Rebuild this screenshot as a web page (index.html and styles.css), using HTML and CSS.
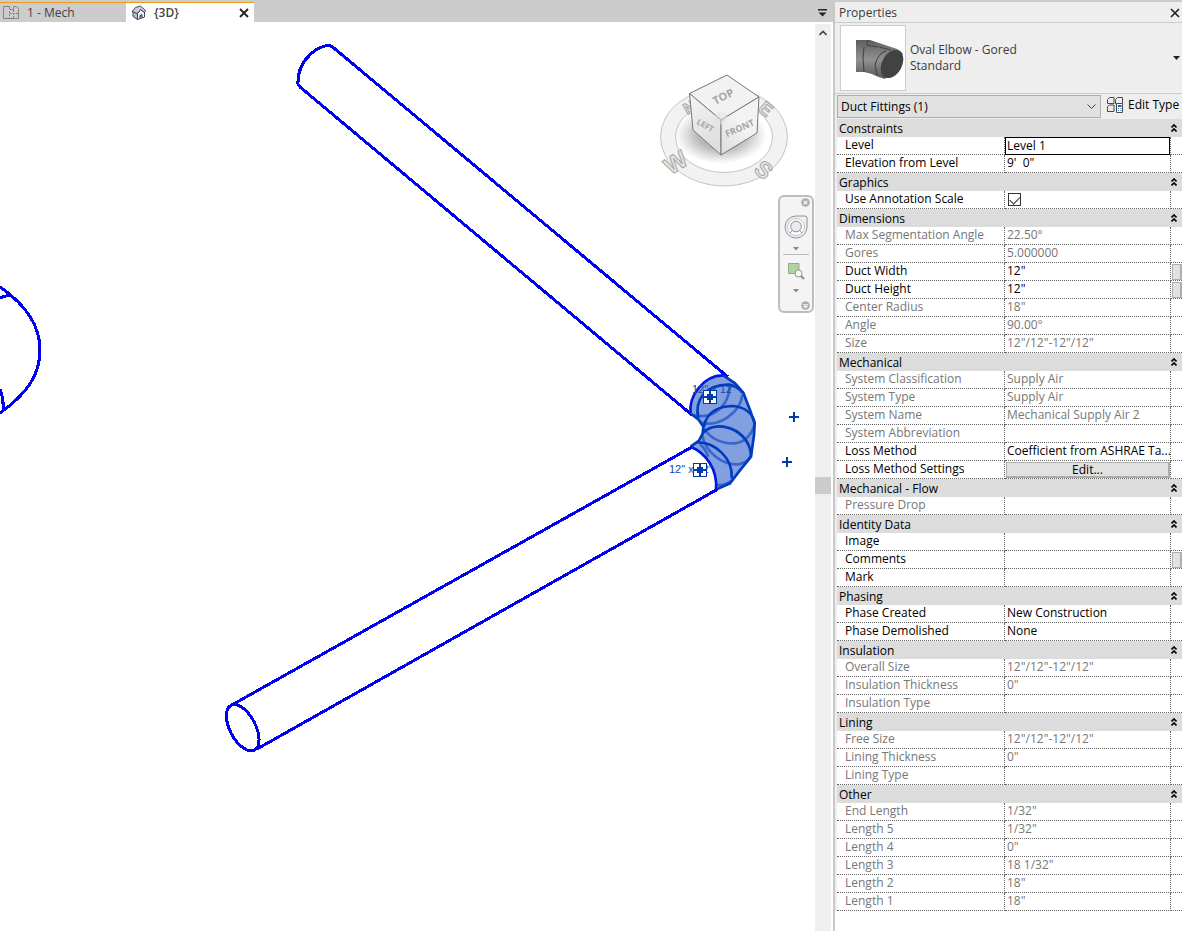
FILE: index.html
```html
<!DOCTYPE html>
<html lang="en">
<head>
<meta charset="utf-8">
<title>{3D} - Properties</title>
<link rel="stylesheet" href="styles.css">
</head>
<body>
<div class="app">
  <main class="workspace">
    <nav class="tabs" aria-label="Views">
      <div class="tab tab-mech">
        <button class="tab-label" type="button">
          <svg width="17" height="16" viewBox="0 0 17 16" fill="none" stroke="#858585"><path d="M6.500 4V1.500H.5v12h6M6.500 4.500h4v-3h3l2 2v10h-9"/><path d="M10.500 5v8M7 8.500h8M6.500 6v8" stroke-dasharray="2 1"/></svg>
          <span>1 - Mech</span>
        </button>
      </div>
      <div class="tab tab-active">
        <button class="tab-label" type="button">
          <svg width="16" height="16" viewBox="0 0 16 16" stroke="#3e4653" stroke-linejoin="round"><path d="M2 6.500l4.500 2v6l-4.500-3z" fill="#aebbd0"/><path d="M6.500 8.500l3-4 4 3v4.500l-7 2.500z" fill="#f5f8fb"/><path d="M1 6.500l3.500-4 5-1.500 5 4.500-1 2-4-3-3 4z" fill="#c6d0df"/><path d="M9 13.500v-3l2-1v3.500" fill="#8091a9"/></svg>
          <span>{3D}</span>
        </button>
        <button class="icon-button" type="button" aria-label="Close view"><svg width="10" height="10" viewBox="0 0 10 10"><path d="M1 1l8 8M9 1L1 9" stroke="#222" stroke-width="1.800"/></svg></button>
      </div>
      <button class="icon-button tab-menu" type="button" aria-label="View list"><svg width="9" height="8" viewBox="0 0 9 8" fill="#222"><path d="M0 0h9v1.500H0zM.5 3.500h8l-4 4z"/></svg></button>
    </nav>
    <div class="view">
      <div class="canvas">
        <svg class="model" viewBox="0 22 815 909" aria-label="3D model">
          <defs>
            <radialGradient id="shade"><stop offset="0.500" stop-color="#999" stop-opacity=".7"/><stop offset="1" stop-color="#aaa" stop-opacity="0"/></radialGradient>
            <linearGradient id="faceL" x1="0" y1="0" x2="0.300" y2="1"><stop offset="0" stop-color="#f4f4f4"/><stop offset="1" stop-color="#dedede"/></linearGradient>
            <linearGradient id="faceR" x1="0" y1="1" x2="0.700" y2="0"><stop offset="0" stop-color="#dcdcdc"/><stop offset=".6" stop-color="#f3f3f3"/></linearGradient>
          </defs>
          <g class="pipe">
            <path d="M0 287C32 309 40 331 40 350C40 374 28 393 0 413M0 298Q5 295 11 296M0 389Q4 399 3 411"/>
            <path d="M728 377L332 46.500C322 42 297 58 298 84L300 87L692 415"/>
            <ellipse cx="242.700" cy="727.700" rx="25.300" ry="12.800" transform="rotate(62.400 242.700 727.700)"/>
            <path d="M230 706L692 447M257 749L718 489"/>
          </g>
          <g transform="translate(655 360) scale(.33333)" class="elbow">
            <path class="elbow-fill" d="M107 162C100 110 145 45 205 46L240 68L265 100L285 150L299 190L297 225L288 290L250 337L225 370L185 388C185 330 155 280 107 260L132 242L143 220L145 200L130 178Z"/>
            <path class="hidden-line" d="M222 70C232 110 192 185 112 165M262 104C258 155 195 202 138 188M147 205C165 235 200 252 240 250C275 245 295 215 299 190M142 225C150 275 200 315 250 313C275 308 285 295 288 285M184 375Q210 378 232 360M135 252Q150 265 160 290"/>
            <path d="M205 46L240 70L265 98L285 150L299 190L297 225L288 290L250 337L225 370L185 388M107 260L132 242L143 220L145 200L130 178L109 162"/>
            <path d="M130 175C118 120 150 75 220 74Q248 78 262 98M147 200C155 150 200 138 235 138C275 143 295 165 299 190M143 220C160 200 190 195 215 202C250 210 285 240 288 285M125 247C180 245 235 295 230 355"/>
            <path class="pipe-end" d="M107 160C100 110 145 45 205 46M107 260C155 280 188 330 183 388"/>
          </g>
          <g class="dimension">
            <text x="692" y="393">12" x 12"</text>
            <text x="669" y="473">12" x 12"</text>
          </g>
          <g class="grip">
            <path class="grip-box" d="M703.500 390.500h13v13h-13zM693.500 463.500h13v13h-13z"/>
            <path d="M710 391v12M704 397h12M700 464v12M694 470h12"/>
            <path d="M708 395h4v4h-4zM698 468h4v4h-4z"/>
            <path d="M794 412v10M789 417h10M787 457v10M782 462h10"/>
          </g>
          <g class="compass">
            <path fill-rule="evenodd" d="M660.500 137a63.500 49 0 1 0 127 0a63.500 49 0 1 0-127 0M675.500 137a48.500 35.500 0 1 0 97 0a48.500 35.500 0 1 0-97 0"/>
            <text x="-11" y="9" transform="translate(675 162) rotate(-32)" font-size="24">W</text>
            <text x="-8" y="8" transform="translate(764 170) rotate(40)" font-size="23">S</text>
            <text x="-7" y="7" transform="translate(767 109) rotate(40)" font-size="18">E</text>
            <text x="-6" y="7" transform="translate(689 106) rotate(-30)" font-size="16">N</text>
          </g>
          <ellipse cx="721" cy="135" rx="46" ry="29" fill="url(#shade)"/>
          <g stroke="#777" stroke-linejoin="round">
            <path d="M689.500 93.500L727 75L759 97L721 120Z" fill="#f2f2f2"/>
            <path d="M689.500 93.500L721 120V155L693 130Z" fill="url(#faceL)"/>
            <path d="M759 97L721 120V155L757 133Z" fill="url(#faceR)"/>
          </g>
          <path d="M715 114l6-3 6 3v7l-6 4-6-4z" fill="#dfe3e9" opacity=".55"/>
          <g class="cube-label">
            <text transform="translate(725 100) rotate(-27)" font-size="11">TOP</text>
            <text transform="translate(704 128) rotate(29)" font-size="8">LEFT</text>
            <text transform="translate(741 131) rotate(-24)" font-size="9">FRONT</text>
          </g>
        </svg>
        <div class="navbar" role="toolbar" aria-label="Navigation">
          <button class="icon-button nav-corner" type="button" aria-label="Close"><svg width="9" height="9" viewBox="0 0 9 9"><circle cx="4.500" cy="4.500" r="4.300" fill="#adadad"/><path d="M2.800 2.800l3.400 3.400M6.200 2.800L2.800 6.200" stroke="#fff" stroke-width="1.200"/></svg></button>
          <button class="icon-button nav-wheel" type="button" aria-label="Steering wheel"><svg width="24" height="24" viewBox="0 0 24 24" fill="#eef0f3" stroke="#8c919b"><path d="M12 1H21Q23 1 23 3V12A11 11 0 1 1 12 1Z"/><circle cx="12" cy="12" r="8.500" fill="#fafafa" stroke="#c4c7cc"/><path d="M6 18l3-3M18 18l-3-3"/><circle cx="12" cy="11.500" r="5.300" fill="#e9ebee"/></svg></button>
          <button class="icon-button nav-arrow" type="button" aria-label="Wheel options"><svg width="6" height="4" viewBox="0 0 6 4"><path d="M0 0h6L3 3.500z" fill="#888"/></svg></button>
          <hr class="nav-rule">
          <button class="icon-button nav-zoom" type="button" aria-label="Zoom region"><svg width="17" height="18" viewBox="0 0 17 18"><path d="M.5 1.500h10.500v10H.5z" fill="#b3d1a4" stroke="#87b47c"/><circle cx="10.500" cy="11.500" r="3.500" fill="#f8f8f8" stroke="#929292"/><path d="M13 14l3 3" stroke="#888" stroke-width="2"/></svg></button>
          <button class="icon-button nav-arrow" type="button" aria-label="Zoom options"><svg width="6" height="4" viewBox="0 0 6 4"><path d="M0 0h6L3 3.500z" fill="#888"/></svg></button>
          <button class="icon-button nav-corner" type="button" aria-label="Customize"><svg width="9" height="9" viewBox="0 0 9 9"><circle cx="4.500" cy="4.500" r="4.300" fill="#adadad"/><path d="M2 3.500h5M2.500 5h4l-2 2z" stroke="#fff" fill="#fff" stroke-width=".7"/></svg></button>
        </div>
      </div>
      <div class="scrollbar">
        <button class="icon-button" type="button" aria-label="Scroll up"><svg width="8" height="6" viewBox="0 0 8 6" fill="none"><path d="M.5 5L4 1.500 7.500 5" stroke="#444" stroke-width="1.600"/></svg></button>
        <div class="thumb"></div>
      </div>
    </div>
  </main>

  <aside class="panel">
    <header class="panel-title"><h1>Properties</h1>
      <button class="icon-button" type="button" aria-label="Close properties"><svg width="10" height="10" viewBox="0 0 10 10"><path d="M1 1l8 8M9 1L1 9" stroke="#222" stroke-width="1.700"/></svg></button>
    </header>
    <section class="type-card">
      <div class="preview">
        <svg width="50" height="44" viewBox="0 0 50 44"><defs><linearGradient id="metal" x1="0" y1="0" x2="0" y2="1"><stop offset="0" stop-color="#5d5d5d"/><stop offset=".5" stop-color="#929292"/><stop offset="1" stop-color="#555"/></linearGradient></defs><path d="M1 2H15L36 9Q45 11 48 16L30 41Q20 38 17 36L9 34H1Z" fill="url(#metal)"/><ellipse cx="37" cy="26" rx="15" ry="10" transform="rotate(-62 37 26)" fill="#424242"/><path d="M13 2L12 6M9 9L8 20L9 34M11 7L23 9M31 13Q23 15 20 27L22 37M24 9L36 12" fill="none" stroke="#3f3f3f"/></svg>
      </div>
      <p class="type-name">Oval Elbow - Gored<br>Standard</p>
      <button class="icon-button type-arrow" type="button" aria-label="Choose type"><svg width="7" height="4" viewBox="0 0 7 4"><path d="M0 0h7L3.500 4z" fill="#222"/></svg></button>
    </section>
    <div class="filter">
      <div class="select-wrap">
        <select aria-label="Category filter"><option>Duct Fittings (1)</option></select>
        <svg width="9" height="6" viewBox="0 0 9 6" fill="none"><path d="M.5.5l4 4 4-4" stroke="#444"/></svg>
      </div>
      <button class="edit-type" type="button">
        <svg width="17" height="16" viewBox="0 0 17 16" fill="none" stroke="#4b4b4b"><path d="M.5 6.500v-4l2-2h4.500v6zM8.500 6.500v-4l2-2h5v6zM.5 14.500v-5l2-1.500h4.500v6.500z"/><path d="M9.500 6.500h6v9h-6z" fill="#fff"/><path d="M11 9h3.500" stroke="#1566b7" stroke-width="2"/><path d="M11 11.500h1M13.500 11.500h1M11 13.500h1M13.500 13.500h1" stroke="#1566b7"/></svg>
        <span>Edit Type</span>
      </button>
    </div>
    <table class="props">
      <colgroup><col class="col-name"><col><col class="col-extra"></colgroup>
      <tbody>
        <tr class="group"><th colspan="2">Constraints</th><td><button class="fold" type="button" aria-label="Collapse Constraints"></button></td></tr>
        <tr><th><label for="level">Level</label></th><td class="focused"><input id="level" value="Level 1"></td><td></td></tr>
        <tr><th><label for="elev">Elevation from Level</label></th><td><input id="elev" value="9'  0&quot;"></td><td></td></tr>
      </tbody>
      <tbody>
        <tr class="group"><th colspan="2">Graphics</th><td><button class="fold" type="button" aria-label="Collapse Graphics"></button></td></tr>
        <tr><th><label for="anno">Use Annotation Scale</label></th><td><input id="anno" type="checkbox" checked></td><td></td></tr>
      </tbody>
      <tbody>
        <tr class="group"><th colspan="2">Dimensions</th><td><button class="fold" type="button" aria-label="Collapse Dimensions"></button></td></tr>
        <tr class="locked"><th>Max Segmentation Angle</th><td>22.50°</td><td></td></tr>
        <tr class="locked"><th>Gores</th><td>5.000000</td><td></td></tr>
        <tr><th><label for="dw">Duct Width</label></th><td><input id="dw" value="12&quot;"></td><td><button class="assoc" type="button" aria-label="Associate Duct Width"></button></td></tr>
        <tr><th><label for="dh">Duct Height</label></th><td><input id="dh" value="12&quot;"></td><td><button class="assoc" type="button" aria-label="Associate Duct Height"></button></td></tr>
        <tr class="locked"><th>Center Radius</th><td>18"</td><td></td></tr>
        <tr class="locked"><th>Angle</th><td>90.00°</td><td></td></tr>
        <tr class="locked"><th>Size</th><td>12"/12"-12"/12"</td><td></td></tr>
      </tbody>
      <tbody>
        <tr class="group"><th colspan="2">Mechanical</th><td><button class="fold" type="button" aria-label="Collapse Mechanical"></button></td></tr>
        <tr class="locked"><th>System Classification</th><td>Supply Air</td><td></td></tr>
        <tr class="locked"><th>System Type</th><td>Supply Air</td><td></td></tr>
        <tr class="locked"><th>System Name</th><td>Mechanical Supply Air 2</td><td></td></tr>
        <tr class="locked"><th>System Abbreviation</th><td></td><td></td></tr>
        <tr><th><label for="loss">Loss Method</label></th><td><input id="loss" value="Coefficient from ASHRAE Ta..."></td><td></td></tr>
        <tr><th>Loss Method Settings</th><td><button class="edit" type="button">Edit...</button></td><td></td></tr>
      </tbody>
      <tbody>
        <tr class="group"><th colspan="2">Mechanical - Flow</th><td><button class="fold" type="button" aria-label="Collapse Mechanical - Flow"></button></td></tr>
        <tr class="locked"><th>Pressure Drop</th><td></td><td></td></tr>
      </tbody>
      <tbody>
        <tr class="group"><th colspan="2">Identity Data</th><td><button class="fold" type="button" aria-label="Collapse Identity Data"></button></td></tr>
        <tr><th><label for="image">Image</label></th><td><input id="image"></td><td></td></tr>
        <tr><th><label for="comments">Comments</label></th><td><input id="comments"></td><td><button class="assoc" type="button" aria-label="Associate Comments"></button></td></tr>
        <tr><th><label for="mark">Mark</label></th><td><input id="mark"></td><td></td></tr>
      </tbody>
      <tbody>
        <tr class="group"><th colspan="2">Phasing</th><td><button class="fold" type="button" aria-label="Collapse Phasing"></button></td></tr>
        <tr><th><label for="created">Phase Created</label></th><td><input id="created" value="New Construction"></td><td></td></tr>
        <tr><th><label for="demolished">Phase Demolished</label></th><td><input id="demolished" value="None"></td><td></td></tr>
      </tbody>
      <tbody>
        <tr class="group"><th colspan="2">Insulation</th><td><button class="fold" type="button" aria-label="Collapse Insulation"></button></td></tr>
        <tr class="locked"><th>Overall Size</th><td>12"/12"-12"/12"</td><td></td></tr>
        <tr class="locked"><th>Insulation Thickness</th><td>0"</td><td></td></tr>
        <tr class="locked"><th>Insulation Type</th><td></td><td></td></tr>
      </tbody>
      <tbody>
        <tr class="group"><th colspan="2">Lining</th><td><button class="fold" type="button" aria-label="Collapse Lining"></button></td></tr>
        <tr class="locked"><th>Free Size</th><td>12"/12"-12"/12"</td><td></td></tr>
        <tr class="locked"><th>Lining Thickness</th><td>0"</td><td></td></tr>
        <tr class="locked"><th>Lining Type</th><td></td><td></td></tr>
      </tbody>
      <tbody>
        <tr class="group"><th colspan="2">Other</th><td><button class="fold" type="button" aria-label="Collapse Other"></button></td></tr>
        <tr class="locked"><th>End Length</th><td>1/32"</td><td></td></tr>
        <tr class="locked"><th>Length 5</th><td>1/32"</td><td></td></tr>
        <tr class="locked"><th>Length 4</th><td>0"</td><td></td></tr>
        <tr class="locked"><th>Length 3</th><td>18 1/32"</td><td></td></tr>
        <tr class="locked"><th>Length 2</th><td>18"</td><td></td></tr>
        <tr class="locked"><th>Length 1</th><td>18"</td><td></td></tr>
      </tbody>
    </table>
  </aside>
</div>
<script src="fold.js"></script>
</body>
</html>
```
FILE: fold.js
```js
// Every group header carries the same double-chevron glyph.
document.querySelectorAll('.fold').forEach(function (button) {
  button.innerHTML = '<svg width="6" height="8" viewBox="0 0 6 8" fill="none" stroke="#000" stroke-width="1.600"><path d="M.5 3.500L3 1l2.500 2.500M.5 7.500L3 5l2.500 2.500"/></svg>';
});
```
FILE: styles.css
```css
* { box-sizing: border-box; }
body { margin: 0; background: #fff; color: #000; font: 12px/16px "Open Sans", "Noto Sans", sans-serif; }
button, input, select { font: inherit; color: inherit; margin: 0; }
button { padding: 0; border: 0; background: none; }
svg { display: block; flex: none; }

.app { display: grid; grid-template-columns: 1fr 349px; min-height: 100vh; border-top: 2px solid #ccc; }
.workspace { display: flex; flex-direction: column; min-width: 0; }
.icon-button { display: flex; align-items: center; justify-content: center; }

.tabs { display: flex; height: 20px; background: #ccc; color: #444; }
.tab { display: flex; align-items: center; justify-content: space-between; border-top: 1px solid #f09a1a; padding: 0 5px 0 3px; }
.tab-mech { width: 126px; }
.tab-active { width: 128px; background: #fff; font-weight: 600; padding-left: 5px; }
.tab-label { display: flex; align-items: center; gap: 7px; }
.tab-menu { margin-left: auto; padding: 2px 6px 0 0; }

.view { display: flex; flex: 1; }
.canvas { position: relative; flex: 1; min-width: 0; }
.model { width: 100%; }
.pipe { fill: none; stroke: #0000f0; stroke-width: 3; shape-rendering: crispEdges; }
.elbow { fill: none; stroke: #003cc0; stroke-width: 8; }
.elbow .elbow-fill { fill: #829fe0; stroke: none; }
.elbow .hidden-line { stroke: #3a66cc; }
.elbow .pipe-end { stroke: #0018dc; }
.dimension { font: 11px "Liberation Sans", Arial, sans-serif; fill: #1546b0; }
.grip { fill: none; stroke: #003ba8; stroke-width: 2; shape-rendering: crispEdges; }
.grip .grip-box { fill: #fff; stroke-width: 1; }
.compass { fill: #f2f2f2; stroke: #c4c4c4; }
.compass text { font-family: "Liberation Sans", Arial, sans-serif; font-weight: 700; fill: #e6e6e6; stroke: #a8a8a8; }
.cube-label { font-family: "Open Sans", sans-serif; font-weight: 700; fill: #a3a5aa; text-anchor: middle; }

.navbar { position: absolute; top: 173px; right: 1px; width: 36px; height: 118px; padding: 0 2px 1px; border: 2px solid #bdbdbd; border-radius: 6px; background: #f4f4f4; display: flex; flex-direction: column; align-items: center; }
.nav-corner { align-self: flex-end; height: 10px; }
.nav-wheel { height: 40px; }
.nav-arrow { height: 4px; }
.nav-rule { width: 26px; margin: 3px 0 5px; border: 0; border-top: 1px solid #bbb; }
.nav-zoom { height: 22px; }
.nav-arrow + .nav-corner { margin-top: auto; }
.nav-zoom + .nav-arrow { margin-top: 7px; }

.scrollbar { width: 16px; margin: 2px 2px 0 0; background: #efefef; display: flex; flex-direction: column; }
.scrollbar .icon-button { width: 15px; height: 17px; }
.thumb { height: 17px; margin-top: 436px; background: #cbcbcb; }

.panel { border-left: 2px solid #c8c8c8; background: #fff; display: flex; flex-direction: column; }
.panel > * { background: #eee; }
.panel-title { display: flex; align-items: center; justify-content: space-between; height: 20px; padding: 2px 2px 0 4px; color: #3c3c3c; }
.panel-title h1 { margin: 0; font: inherit; }
.type-card { display: flex; align-items: center; gap: 4px; height: 72px; padding: 0 2px 0 5px; border: 1px solid #ccc; border-width: 1px 0; color: #3c3c3c; }
.preview { display: flex; align-items: center; justify-content: flex-end; width: 66px; height: 66px; padding-top: 3px; border: 1px solid #ccc; background: #fff; }
.type-name { flex: 1; margin: 0; }
.filter { display: flex; gap: 6px; height: 25px; padding: 1px 0 1px 2px; }
.select-wrap { flex: 1; display: grid; align-items: center; border: 1px solid #adadad; background: #e1e1e1; }
.select-wrap select { grid-area: 1 / 1; width: 100%; height: 100%; padding: 0 3px; border: 0; background: none; appearance: none; }
.select-wrap svg { grid-area: 1 / 1; justify-self: end; margin-right: 4px; pointer-events: none; }
.edit-type { display: flex; align-items: center; gap: 4px; width: 75px; padding-bottom: 3px; white-space: nowrap; }

.panel .props { width: 100%; table-layout: fixed; border-collapse: separate; border-spacing: 0; border-left: 2px solid #eee; background: #fff; }
.col-name { width: 168px; }
.col-extra { width: 11px; }
.props th, .props td { height: 18px; padding: 0 0 2px 2px; border-bottom: 1px dotted #666; border-right: 1px dotted #666; text-align: left; font-weight: 400; line-height: 15px; white-space: nowrap; overflow: hidden; }
.props th { padding-left: 8px; }
.props td:last-child { border-right: 0; padding: 0; }
.props .group th, .props .group td { padding: 0 0 0 2px; border: 0; background: #dcdcdc; }
.props .group td { padding: 0; }
.locked { color: #777; }
.props input { display: block; width: 100%; height: 15px; padding: 0; border: 0; outline: 0; background: none; white-space: pre; }
.props .focused { padding: 0; border-bottom: 0; }
.props .focused input { height: 18px; padding: 0 1px 2px; border: 1px solid #000; }
.props input[type="checkbox"] { appearance: none; width: 13px; height: 13px; margin: 2px 0 0 1px; border: 1px solid #333; display: grid; place-items: center; }
.props input[type="checkbox"]:checked::before { content: ""; width: 9px; height: 5px; margin-bottom: 2px; border: solid #333; border-width: 0 0 1px 1px; rotate: -45deg; }
.props td:has(.edit) { padding: 0 0 0 1px; }
.edit { display: block; width: 100%; height: 16px; border: 1px solid #adadad; border-width: 1px 2px 2px 1px; background: #e1e1e1; line-height: 13px; }
.assoc { display: block; width: 10px; height: 16px; margin-left: 1px; border: 1px solid #adadad; border-right-width: 2px; background: #e1e1e1; }
.fold { display: flex; align-items: center; height: 18px; }
```
